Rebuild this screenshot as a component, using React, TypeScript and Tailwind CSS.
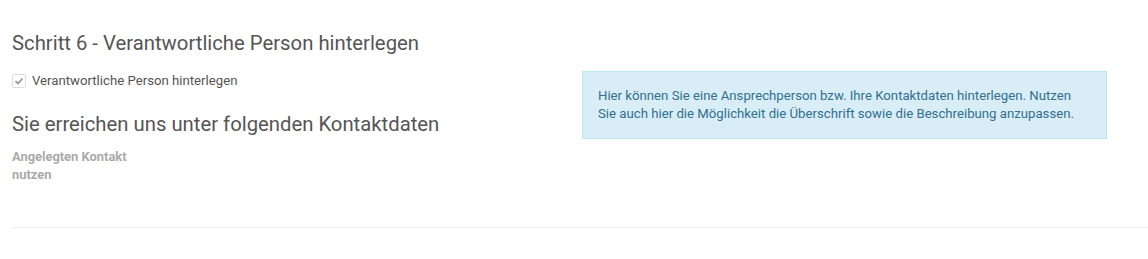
import React from "react";

const App: React.FC = () => {
  return (
    <div className="w-[1148px] h-[259px] bg-white font-['Roboto',sans-serif] text-[#555] overflow-hidden">
      <div className="pl-3 pt-[30px]">
        <h3 className="text-[20.3px] leading-[26px] font-normal text-[#555]">
          Schritt 6 - Verantwortliche Person hinterlegen
        </h3>

        <div className="flex items-start mt-[16px]">
          {/* Left column */}
          <div className="w-[570px] shrink-0">
            <label className="flex items-center gap-[6px] text-[13.2px] leading-[18px] text-[#555]">
              <span className="w-[14px] h-[14px] border border-[#ddd] bg-white rounded-[2px] flex items-center justify-center">
                <svg width="10" height="10" viewBox="0 0 10 10">
                  <path d="M1.5 5.2 L4 7.5 L8.5 2.5" fill="none" stroke="#999" strokeWidth="1.8" />
                </svg>
              </span>
              Verantwortliche Person hinterlegen
            </label>

            <h3 className="mt-[21px] text-[20.3px] leading-[26px] font-normal text-[#555]">
              Sie erreichen uns unter folgenden Kontaktdaten
            </h3>

            <div className="mt-[11px] text-[12.9px] leading-[18px] font-bold text-[#aaa]">
              Angelegten Kontakt
              <br />
              nutzen
            </div>
          </div>

          {/* Right column: info box */}
          <div className="w-[525px] mt-[-1px] border border-[#bce8f1] bg-[#d9edf7] px-[15px] py-[15px] text-[13.2px] leading-[18px] text-[#31708f]">
            Hier können Sie eine Ansprechperson bzw. Ihre Kontaktdaten hinterlegen. Nutzen Sie auch hier die
            Möglichkeit die Überschrift sowie die Beschreibung anzupassen.
          </div>
        </div>

        <div className="mt-[43px] border-t border-[#eee]" />
      </div>
    </div>
  );
};

export default App;
